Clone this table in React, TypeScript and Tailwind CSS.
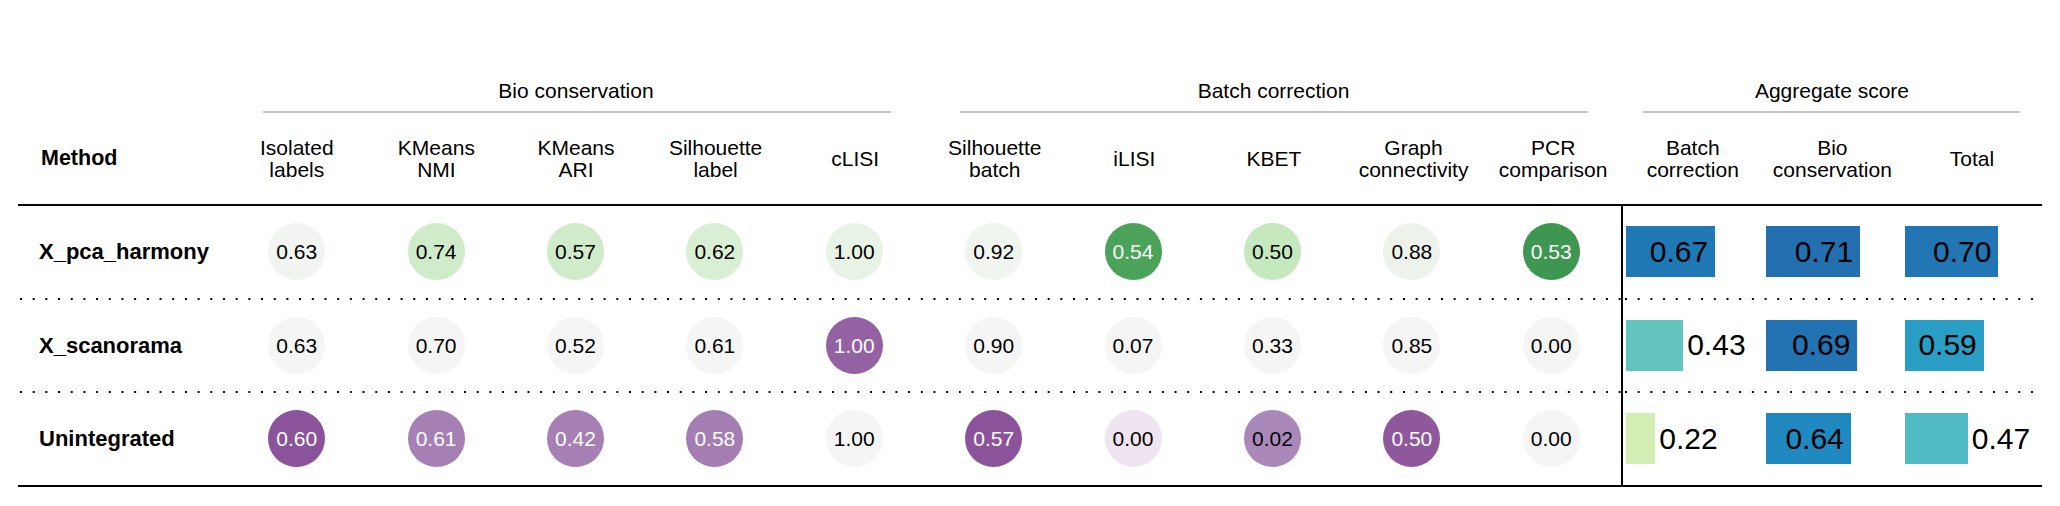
import React from "react"

type Cell = { v: string; bg: string; light?: boolean }

const headers: string[][] = [
	["Isolated", "labels"],
	["KMeans", "NMI"],
	["KMeans", "ARI"],
	["Silhouette", "label"],
	["cLISI"],
	["Silhouette", "batch"],
	["iLISI"],
	["KBET"],
	["Graph", "connectivity"],
	["PCR", "comparison"],
	["Batch", "correction"],
	["Bio", "conservation"],
	["Total"],
]

const rows: { name: string; cells: Cell[]; agg: { v: number; bg: string }[] }[] = [
	{
		name: "X_pca_harmony",
		cells: [
			{ v: "0.63", bg: "#f2f4f1" },
			{ v: "0.74", bg: "#cfebc9" },
			{ v: "0.57", bg: "#cfebc9" },
			{ v: "0.62", bg: "#d9efd4" },
			{ v: "1.00", bg: "#e7f3e4" },
			{ v: "0.92", bg: "#f1f5f0" },
			{ v: "0.54", bg: "#4ba35a", light: true },
			{ v: "0.50", bg: "#c5e8bf" },
			{ v: "0.88", bg: "#edf3eb" },
			{ v: "0.53", bg: "#3d9751", light: true },
		],
		agg: [
			{ v: 0.67, bg: "#2079b5" },
			{ v: 0.71, bg: "#236fb0" },
			{ v: 0.7, bg: "#2176b3" },
		],
	},
	{
		name: "X_scanorama",
		cells: [
			{ v: "0.63", bg: "#f5f5f5" },
			{ v: "0.70", bg: "#f5f5f5" },
			{ v: "0.52", bg: "#f5f5f5" },
			{ v: "0.61", bg: "#f5f5f5" },
			{ v: "1.00", bg: "#9461a2", light: true },
			{ v: "0.90", bg: "#f5f5f5" },
			{ v: "0.07", bg: "#f5f5f5" },
			{ v: "0.33", bg: "#f5f5f5" },
			{ v: "0.85", bg: "#f5f5f5" },
			{ v: "0.00", bg: "#f5f5f5" },
		],
		agg: [
			{ v: 0.43, bg: "#63c3bf" },
			{ v: 0.69, bg: "#2372b1" },
			{ v: 0.59, bg: "#2a9ec4" },
		],
	},
	{
		name: "Unintegrated",
		cells: [
			{ v: "0.60", bg: "#8b5399", light: true },
			{ v: "0.61", bg: "#a680b5", light: true },
			{ v: "0.42", bg: "#a680b5", light: true },
			{ v: "0.58", bg: "#a47db3", light: true },
			{ v: "1.00", bg: "#f5f5f5" },
			{ v: "0.57", bg: "#8b5399", light: true },
			{ v: "0.00", bg: "#efe5f0" },
			{ v: "0.02", bg: "#ab88ba" },
			{ v: "0.50", bg: "#8f579c", light: true },
			{ v: "0.00", bg: "#f5f5f5" },
		],
		agg: [
			{ v: 0.22, bg: "#d3eeb4" },
			{ v: 0.64, bg: "#2089bf" },
			{ v: 0.47, bg: "#50bac5" },
		],
	},
]

const Dotted = () => (
	<div className="h-[2px] bg-[linear-gradient(to_right,#000_2px,transparent_2px)] bg-[length:12.7px_2px] bg-[position:2px_0]" />
)

const App = () => {
	return (
		<div className="w-[2060px] h-[506px] bg-white text-black font-['Liberation_Sans',Arial,sans-serif]">
			<div className="pl-[18px] pt-[70px]">
				{/* group titles */}
				<div className="flex">
					<div className="w-[209px]" />
					<div className="w-[698px] flex flex-col">
						<div className="h-[41px] flex items-center justify-center text-[21px]">Bio conservation</div>
						<div className="ml-[36px] mr-[34px] h-[2px] bg-[#c6c6c6]" />
					</div>
					<div className="w-[697px] flex flex-col">
						<div className="h-[41px] flex items-center justify-center text-[21px]">Batch correction</div>
						<div className="ml-[35px] mr-[34px] h-[2px] bg-[#c6c6c6]" />
					</div>
					<div className="w-[420px] flex flex-col">
						<div className="h-[41px] flex items-center justify-center text-[21px]">Aggregate score</div>
						<div className="ml-[21px] mr-[22px] h-[2px] bg-[#c6c6c6]" />
					</div>
				</div>

				{/* column headers */}
				<div className="grid grid-cols-[209px_repeat(13,139.6px)] h-[91px] items-center">
					<div className="pl-[23px] text-[21.5px] font-bold">Method</div>
					{headers.map((h, i) => (
						<div key={i} className="text-center text-[21px] leading-[21.5px]">
							{h.map((l, j) => (
								<div key={j}>{l}</div>
							))}
						</div>
					))}
				</div>
				<div className="w-[2024px] h-[2px] bg-black" />

				{/* body */}
				<div className="flex w-[2024px]">
					<div className="w-[1603px]">
						{rows.map((r, ri) => (
							<div key={r.name}>
								{ri > 0 && <Dotted />}
								<div className="grid grid-cols-[209px_repeat(10,139.4px)] h-[91.5px] items-center">
									<div className="pl-[21px] text-[22px] font-bold">{r.name}</div>
									{r.cells.map((c, ci) => (
										<div key={ci} className="flex justify-center">
											<div
												className={`w-[57px] h-[57px] rounded-full flex items-center justify-center text-[21px] ${c.light ? "text-white" : "text-black"}`}
												style={{ backgroundColor: c.bg }}
											>
												{c.v}
											</div>
										</div>
									))}
								</div>
							</div>
						))}
					</div>
					<div className="flex-1 border-l-2 border-black">
						{rows.map((r, ri) => (
							<div key={r.name}>
								{ri > 0 && <Dotted />}
								<div className="grid grid-cols-3 h-[91.5px] items-center">
									{r.agg.map((a, ai) => (
										<div key={ai} className="flex items-center pl-[3px]">
											<div
												className="h-[51px] flex items-center justify-end pr-[7px] text-[30px] leading-none"
												style={{ width: `${a.v * 133}px`, backgroundColor: a.bg }}
											>
												{a.v >= 0.5 ? a.v.toFixed(2) : ""}
											</div>
											{a.v < 0.5 && <span className="ml-[4px] text-[30px] leading-none">{a.v.toFixed(2)}</span>}
										</div>
									))}
								</div>
							</div>
						))}
					</div>
				</div>
				<div className="w-[2024px] h-[2px] bg-black" />
			</div>
		</div>
	)
}

export default App
